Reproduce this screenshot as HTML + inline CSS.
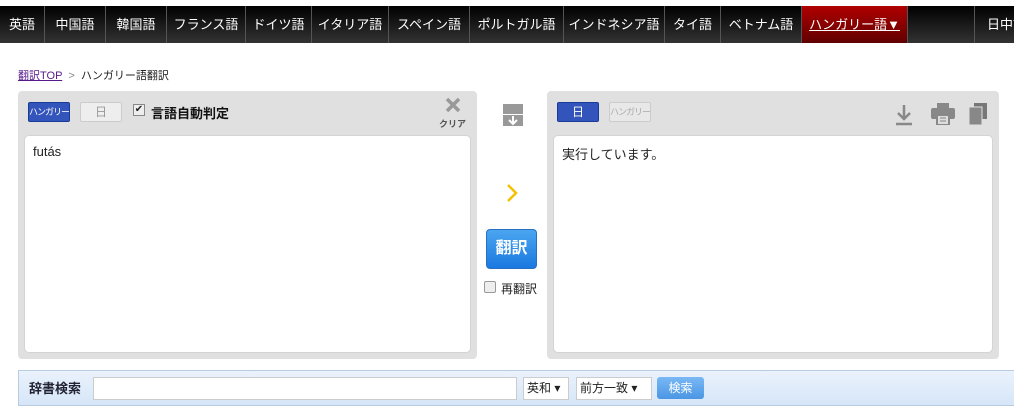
<!DOCTYPE html>
<html><head><meta charset="utf-8"><style>
*{margin:0;padding:0;box-sizing:border-box}
body{width:1014px;height:414px;overflow:hidden;background:#fff;font-family:"Liberation Sans","Noto Sans CJK JP",sans-serif;font-size:12px;color:#222;position:relative}
.nav{position:absolute;top:6px;left:0;width:1014px;height:37px;background:linear-gradient(#000,#333);display:flex}
.nav div{color:#fff;font-size:13px;line-height:37px;text-align:center;border-right:1px solid #555;flex:none;white-space:nowrap}
.nav .act{background:linear-gradient(#b00000,#600000);text-decoration:underline}
.abs{position:absolute}
.panel{position:absolute;top:91px;height:268px;background:#e0e0e0;border-radius:4px}
.ta{position:absolute;background:#fff;border-radius:5px;border:1px solid #d4d4d4;font-size:13px;padding:8px 8px}
.btn{position:absolute;height:20px;font-size:11px;text-align:center;line-height:18px;border-radius:2px;white-space:nowrap;overflow:hidden}
.sm{font-size:9px;letter-spacing:-1px}
</style></head><body>
<div class="nav">
<div style="width:45px">英語</div><div style="width:61px">中国語</div><div style="width:61px">韓国語</div><div style="width:79px">フランス語</div><div style="width:66px">ドイツ語</div><div style="width:77px">イタリア語</div><div style="width:81px">スペイン語</div><div style="width:94px">ポルトガル語</div><div style="width:101px">インドネシア語</div><div style="width:56px">タイ語</div><div style="width:81px">ベトナム語</div><div class="act" style="width:106px">ハンガリー語▼</div><div style="width:67px"></div><div style="width:39px;border:none;text-align:left;padding-left:12px">日中語</div>
</div>
<div class="abs" style="left:18px;top:67px;font-size:11px"><span style="color:#551a8b;text-decoration:underline">翻訳TOP</span> <span style="color:#888">&nbsp;&gt;&nbsp;</span> ハンガリー語翻訳</div>

<div class="panel" style="left:18px;width:459px">
<div class="btn sm" style="left:10px;top:11px;width:42px;background:#3355bb;border:1px solid #1a3a99;color:#fff">ハンガリー</div>
<div class="btn" style="left:62px;top:11px;width:42px;background:#eee;border:1px solid #ccc;color:#999;font-size:12px">日</div>
<div class="abs" style="left:115px;top:13px;width:12px;height:12px;border:1px solid #888;background:#eee;font-size:10px;line-height:10px;text-align:center">✔</div>
<div class="abs" style="left:133px;top:12px;font-size:13px;font-weight:bold;color:#111">言語自動判定</div>
<svg class="abs" style="left:427px;top:6px" width="16" height="16"><path d="M2 2L14 14M14 2L2 14" stroke="#999" stroke-width="3.5"/></svg>
<div class="abs" style="left:421px;top:26px;font-size:9px;color:#555;font-weight:bold">クリア</div>
<div class="ta" style="left:6px;top:44px;width:447px;height:218px">futás</div>
</div>

<svg class="abs" style="left:503px;top:104px" width="20" height="22"><rect width="20" height="22" fill="#999"/><path d="M0 10.5H20" stroke="#fff"/><path d="M10 12V20M6 16L10 20L14 16" stroke="#fff" stroke-width="2" fill="none"/></svg>
<svg class="abs" style="left:505px;top:183px" width="14" height="20"><path d="M3 2L11 10L3 18" stroke="#f5c000" stroke-width="2.5" fill="none"/></svg>
<div class="abs" style="left:486px;top:229px;width:51px;height:40px;border-radius:4px;background:linear-gradient(#4aa6f0,#1a78e0);border:1px solid #2a70c0;color:#fff;font-size:16px;font-weight:bold;text-align:center;line-height:38px">翻訳</div>
<div class="abs" style="left:484px;top:281px;width:12px;height:12px;border:1px solid #999;border-radius:2px;background:#eee"></div>
<div class="abs" style="left:501px;top:280px;font-size:12px">再翻訳</div>

<div class="panel" style="left:547px;width:452px">
<div class="btn" style="left:10px;top:11px;width:42px;background:#3355bb;border:1px solid #1a3a99;color:#fff;font-size:12px">日</div>
<div class="btn sm" style="left:62px;top:11px;width:42px;background:#e8e8e8;border:1px solid #ccc;color:#aaa">ハンガリー</div>
<svg class="abs" style="left:347px;top:13px" width="20" height="22"><path d="M10 1V15M4 9L10 15L16 9" stroke="#888" stroke-width="2.5" fill="none"/><path d="M2 20H18" stroke="#888" stroke-width="2.5"/></svg>
<svg class="abs" style="left:384px;top:12px" width="24" height="22"><rect x="6" y="0" width="12" height="5" fill="#888"/><rect x="0" y="5" width="24" height="11" rx="2" fill="#888"/><rect x="5" y="11" width="14" height="11" fill="#888"/><rect x="7" y="13" width="10" height="8" fill="#ddd"/><path d="M9 15H15M9 18H15" stroke="#888"/></svg>
<svg class="abs" style="left:421px;top:12px" width="20" height="22"><rect x="6" y="0" width="13" height="16" fill="#777"/><rect x="1" y="4" width="13" height="18" fill="#888" stroke="#e0e0e0"/></svg>
<div class="ta" style="left:6px;top:44px;width:440px;height:218px">実行しています。</div>
</div>

<div class="abs" style="left:18px;top:370px;width:1000px;height:36px;background:linear-gradient(#eaf2fc,#d6e6f8);border:1px solid #b8cce4">
<div class="abs" style="left:10px;top:7px;font-size:13px;font-weight:bold;color:#223">辞書検索</div>
<div class="abs" style="left:74px;top:6px;width:424px;height:23px;background:#fff;border:1px solid #ccc"></div>
<div class="abs" style="left:504px;top:6px;width:46px;height:23px;background:#fff;border:1px solid #ccc;font-size:12px;line-height:21px;padding-left:3px">英和 ▾</div>
<div class="abs" style="left:557px;top:6px;width:76px;height:23px;background:#fff;border:1px solid #ccc;font-size:12px;line-height:21px;padding-left:3px">前方一致 ▾</div>
<div class="abs" style="left:638px;top:6px;width:47px;height:22px;background:linear-gradient(#7ab8f4,#4a96e4);border-radius:3px;color:#fff;font-size:12px;text-align:center;line-height:22px">検索</div>
</div>
</body></html>
